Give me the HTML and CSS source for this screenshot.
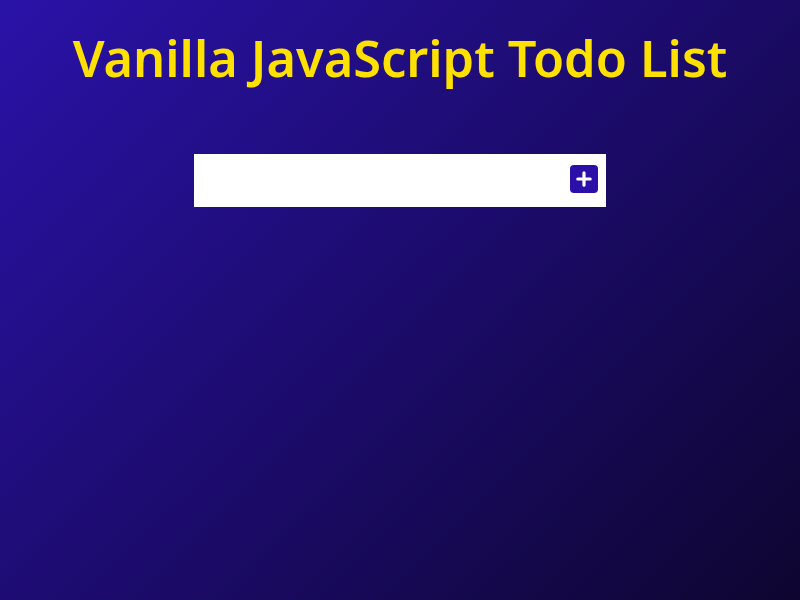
FILE: index.html
```html
<!DOCTYPE html>
<html lang="en">
<head>
<meta charset="utf-8">
<title>Vanilla JavaScript Todo List</title>
<link rel="stylesheet" href="styles.css">
</head>
<body>
<header class="header">
  <h1 class="title">Vanilla JavaScript Todo List</h1>
</header>
<form class="todo-form">
  <input class="todo-input" type="text" aria-label="New todo">
  <button class="todo-button" type="submit" aria-label="Add todo">
    <svg width="16" height="16" viewBox="0 0 16 16"><path d="M8 1.8v12.4M1.8 8h12.4" stroke="#fff" stroke-width="3.2" stroke-linecap="round"/></svg>
  </button>
</form>
<div class="todo-container">
  <ul class="todo-list"></ul>
</div>
</body>
</html>
```
FILE: styles.css
```css
* { box-sizing: border-box; margin: 0; padding: 0; }
html, body { height: 100%; }
body {
  background-image: linear-gradient(135deg, #2a12a8 0%, #0e0530 100%);
  font-family: "Noto Sans", "Open Sans", sans-serif;
  min-height: 100vh;
}
.header {
  display: flex;
  justify-content: center;
  padding-top: 22px;
}
.title {
  color: #ffe100;
  font-size: 50.5px;
  font-weight: 600;
  line-height: 72px;
  letter-spacing: 0;
}
.todo-form {
  display: flex;
  align-items: flex-start;
  width: 412px;
  height: 53px;
  margin: 60px auto 0;
  padding-top: 11px;
  background: #fff;
}
.todo-input {
  flex: 1;
  height: 31px;
  border: none;
  outline: none;
  padding: 0 12px;
  font-size: 20px;
  background: transparent;
}
.todo-button {
  width: 28px;
  height: 28px;
  margin-right: 8px;
  border: none;
  border-radius: 4px;
  background: #2a10a8;
  display: flex;
  align-items: center;
  justify-content: center;
}
.todo-list { list-style: none; }
```
